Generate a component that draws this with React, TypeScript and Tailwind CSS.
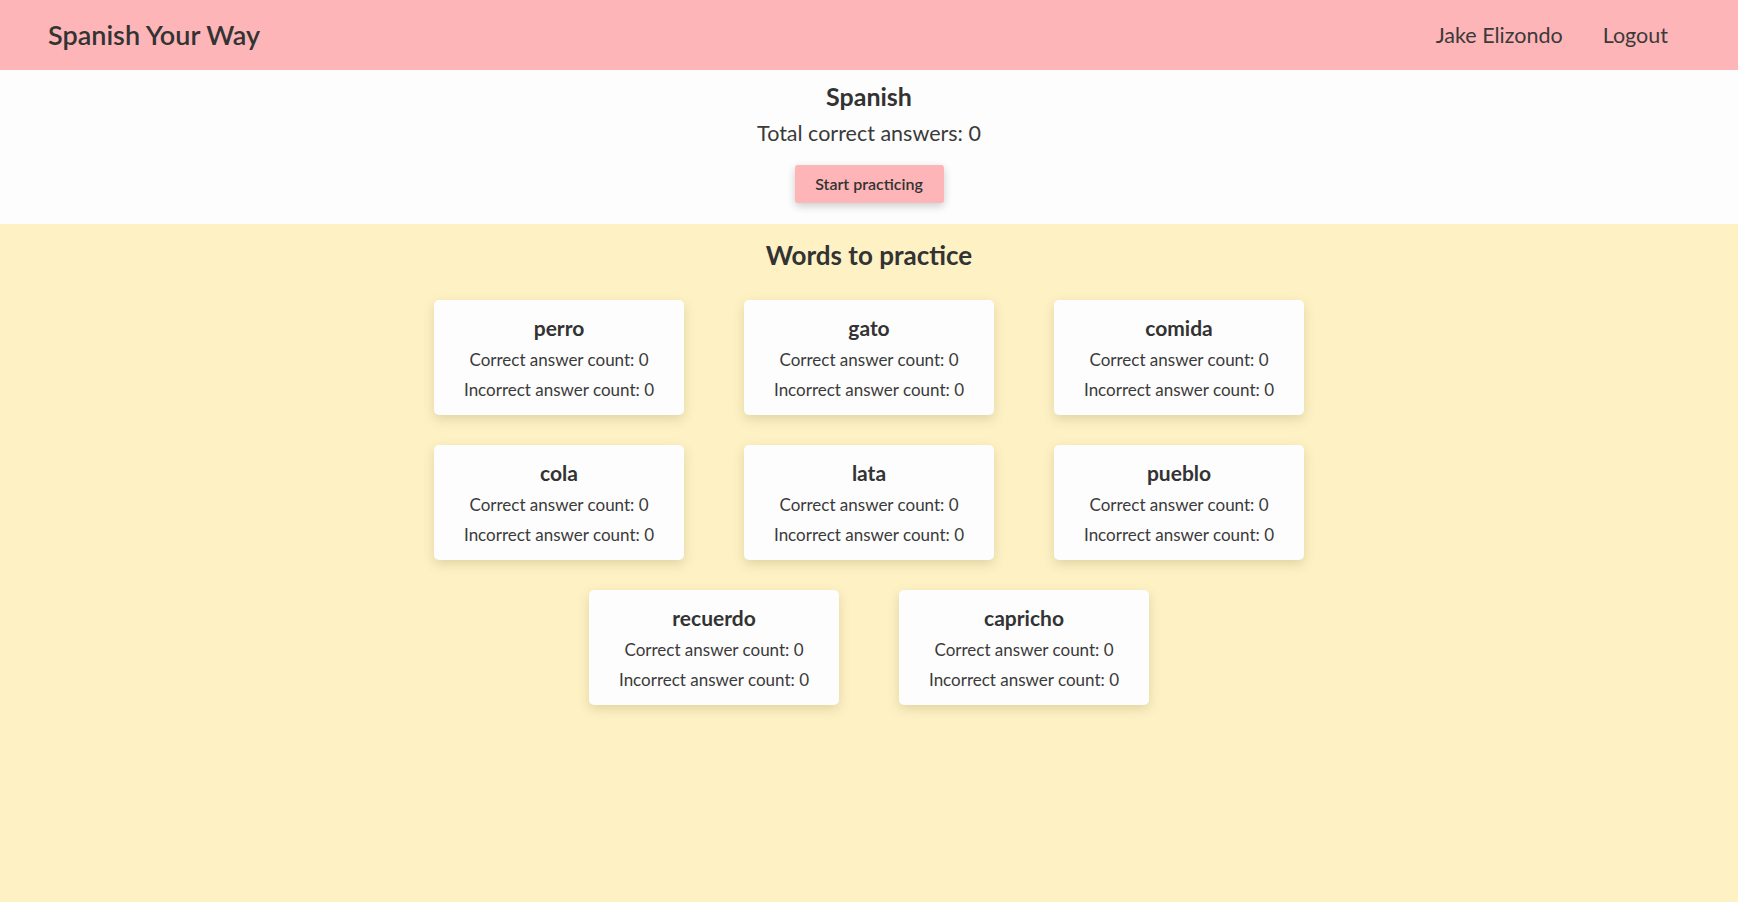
const words = ["perro", "gato", "comida", "cola", "lata", "pueblo", "recuerdo", "capricho"];

function WordCard({ word }: { word: string }) {
  return (
    <div className="w-[250px] h-[115px] bg-[#fdfdfd] rounded-[5px] shadow-[0_4px_12px_rgba(90,70,0,0.18)] flex flex-col items-center pt-[14px]">
      <h3 className="text-[21px] leading-[28px] font-bold text-[#333]">{word}</h3>
      <p className="mt-[6px] text-[17px] leading-[24px] text-[#3a3a3a]">Correct answer count: 0</p>
      <p className="mt-[6px] text-[17px] leading-[24px] text-[#3a3a3a]">Incorrect answer count: 0</p>
    </div>
  );
}

export default function App() {
  return (
    <div className="min-h-[902px] flex flex-col bg-[#fef2c5] text-[#333] font-['Lato',sans-serif]">
      <header className="h-[70px] bg-[#feb5b7] flex items-center justify-between pl-[48px] pr-[70px]">
        <span className="text-[27px] font-semibold text-[#333]">Spanish Your Way</span>
        <nav className="flex items-center gap-[40px] text-[21.5px] text-[#3a3a3a]">
          <a>Jake Elizondo</a>
          <a>Logout</a>
        </nav>
      </header>

      <section className="bg-[#fdfdfd] flex flex-col items-center pt-[10px] pb-[21px]">
        <h1 className="text-[25px] leading-[32px] font-bold">Spanish</h1>
        <p className="mt-[7px] text-[21.5px] leading-[28px] text-[#3a3a3a]">Total correct answers: 0</p>
        <button className="mt-[18px] h-[38px] w-[149px] rounded-[3px] bg-[#feb5b7] text-[16px] font-semibold text-[#333] shadow-[0_3px_8px_rgba(0,0,0,0.2)]">
          Start practicing
        </button>
      </section>

      <section className="flex-1 flex flex-col items-center pt-[14px]">
        <h2 className="text-[26px] leading-[34px] font-bold">Words to practice</h2>
        <div className="mt-[28px] w-[870px] flex flex-wrap justify-center gap-x-[60px] gap-y-[30px]">
          {words.map((w) => (
            <WordCard key={w} word={w} />
          ))}
        </div>
      </section>
    </div>
  );
}
